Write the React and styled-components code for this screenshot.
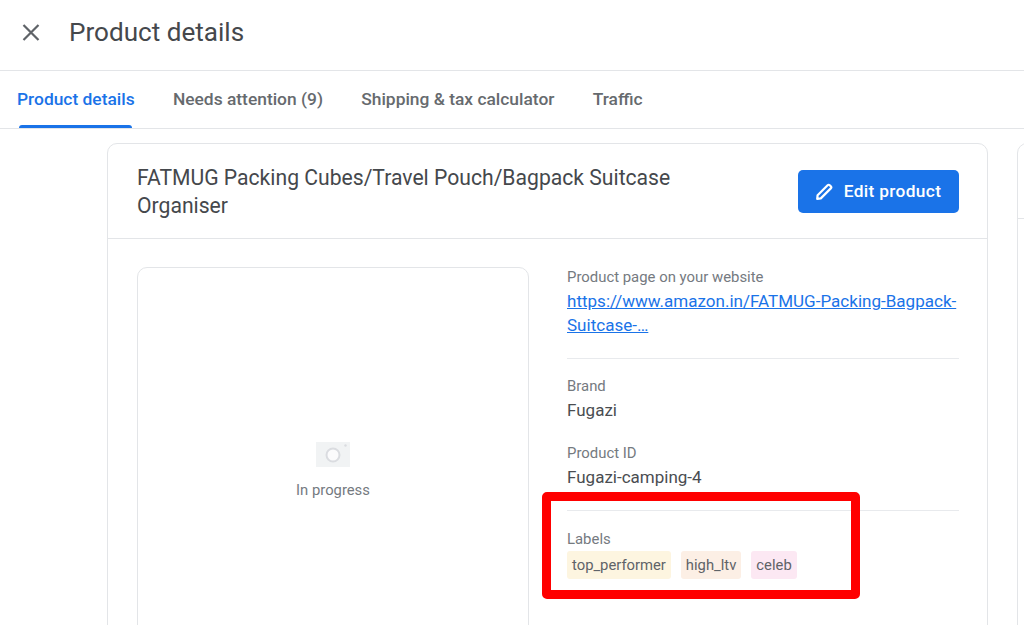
import React from 'react';
import styled, { createGlobalStyle } from 'styled-components';

const GlobalStyle = createGlobalStyle`
  html, body {
    margin: 0;
    padding: 0;
    height: 100%;
    overflow: hidden;
    background: #fff;
    font-family: Roboto, "Liberation Sans", sans-serif;
  }
`;

const Page = styled.div`
  position: relative;
  width: 1024px;
  height: 625px;
  overflow: hidden;
`;

const TopBar = styled.header`
  height: 70px;
  box-sizing: content-box;
  display: flex;
  align-items: center;
  border-bottom: 1px solid #e3e5e8;
`;

const CloseButton = styled.div`
  width: 69px;
  padding: 0 0 6px 21px;
  box-sizing: border-box;
  display: flex;
  align-items: center;
  color: #5f6368;
`;

const PageTitle = styled.h1`
  margin: 0 0 6px;
  font-size: 26.1px;
  font-weight: 400;
  color: #45484c;
`;

const Tabs = styled.nav`
  height: 57px;
  display: flex;
  padding-left: 17px;
  gap: 38.25px;
  border-bottom: 1px solid #e3e5e8;
`;

const Tab = styled.div`
  position: relative;
  display: flex;
  align-items: center;
  box-sizing: border-box;
  padding-bottom: 2px;
  font-size: 17.4px;
  font-weight: 470;
  color: ${(props) => (props.active ? '#1a73e8' : '#666a6e')};

  ${(props) => props.active && `
    &::after {
      content: '';
      position: absolute;
      left: 2px;
      right: 3px;
      bottom: 0;
      height: 3px;
      border-radius: 3px 3px 0 0;
      background: #1a73e8;
    }
  `}
`;

const Content = styled.main`
  display: flex;
  gap: 29px;
  padding: 14px 0 0 107px;
`;

const Card = styled.section`
  flex: none;
  width: 881px;
  height: 520px;
  box-sizing: border-box;
  border: 1px solid #e3e5e8;
  border-radius: 10px;
`;

const SideCard = styled.section`
  flex: none;
  width: 120px;
  height: 520px;
  box-sizing: border-box;
  border: 1px solid #e3e5e8;
  border-radius: 10px;
`;

const SideCardHeader = styled.div`
  height: 74px;
  border-bottom: 1px solid #e3e5e8;
`;

const CardHeader = styled.div`
  height: 95px;
  box-sizing: border-box;
  display: flex;
  align-items: center;
  justify-content: space-between;
  padding: 0 28px 0 29px;
  border-bottom: 1px solid #e3e5e8;
`;

const ProductName = styled.h2`
  margin: 1px 0 0;
  width: 560px;
  font-size: 21.15px;
  line-height: 28px;
  font-weight: 400;
  color: #45484c;
`;

const EditButton = styled.button`
  width: 161px;
  height: 43px;
  display: flex;
  align-items: center;
  justify-content: center;
  gap: 11px;
  padding: 0;
  border: 0;
  border-radius: 5px;
  background: #1a73e8;
  color: #fff;
  font-family: inherit;
  font-size: 17.3px;
  letter-spacing: 0.35px;
  font-weight: 500;
`;

const CardBody = styled.div`
  display: flex;
  gap: 38px;
  padding: 28px 28px 0 29px;
`;

const ImageBox = styled.div`
  flex: none;
  width: 392px;
  height: 400px;
  box-sizing: border-box;
  display: flex;
  flex-direction: column;
  align-items: center;
  padding-top: 174px;
  border: 1px solid #e3e5e8;
  border-radius: 10px;
`;

const ImageStatus = styled.div`
  margin-top: 14px;
  font-size: 14.8px;
  line-height: 18px;
  color: #757a7f;
`;

const Details = styled.div`
  flex: 1;
  min-width: 0;
`;

const Section = styled.div`
  padding: ${(props) => props.padding || '0'};
  border-bottom: ${(props) => (props.divided ? '1px solid #e8eaed' : '0')};
`;

const Field = styled.div`
  margin-bottom: ${(props) => props.spaced || '0'};
`;

const FieldLabel = styled.div`
  font-size: 14.9px;
  line-height: 20px;
  color: #757a7f;
`;

const FieldValue = styled.div`
  margin-top: 2px;
  font-size: 17px;
  line-height: 24px;
  color: #4a4d51;
`;

const ProductLink = styled.a`
  display: block;
  margin-top: 3px;
  font-size: 17.05px;
  line-height: 23.5px;
  color: #1a73e8;
  text-decoration: underline;
`;

const Chips = styled.div`
  display: flex;
  gap: 10px;
  margin-top: 2px;
`;

const Chip = styled.span`
  height: 28px;
  display: flex;
  align-items: center;
  padding: 0 5px;
  border-radius: 3px;
  font-size: 14.8px;
  color: #5f6368;
  background: ${(props) => props.color};
`;

const Highlight = styled.div`
  position: absolute;
  left: 542px;
  top: 492px;
  width: 318px;
  height: 107px;
  box-sizing: border-box;
  border: 9px solid #ff0000;
  border-radius: 5px;
`;

const CloseIcon = () => (
  <svg width="20" height="20" viewBox="0 0 20 20" fill="none" stroke="currentColor" strokeWidth="2.2">
    <path d="M2.5 3 L17.5 18 M17.5 3 L2.5 18" />
  </svg>
);

const PencilIcon = () => (
  <svg width="17" height="17" viewBox="0 0 17 17" fill="none" stroke="#fff" strokeWidth="2.2" strokeLinejoin="round">
    <path d="M1.2 15.8 L1.6 12.2 L11.6 2.2 C12.2 1.6 13.1 1.6 13.7 2.2 L14.8 3.3 C15.4 3.9 15.4 4.8 14.8 5.4 L4.8 15.4 Z" />
  </svg>
);

const PlaceholderIcon = () => (
  <svg width="34" height="25" viewBox="0 0 34 25">
    <rect width="34" height="25" fill="#f1f3f4" />
    <circle cx="17" cy="13" r="6.5" fill="#fbfbfc" stroke="#dadce0" strokeWidth="2" />
    <circle cx="29.5" cy="3.5" r="1.2" fill="#dadce0" />
  </svg>
);

const App = () => (
  <Page>
    <GlobalStyle />
    <TopBar>
      <CloseButton><CloseIcon /></CloseButton>
      <PageTitle>Product details</PageTitle>
    </TopBar>
    <Tabs>
      <Tab active>Product details</Tab>
      <Tab>Needs attention (9)</Tab>
      <Tab>Shipping &amp; tax calculator</Tab>
      <Tab>Traffic</Tab>
    </Tabs>
    <Content>
      <Card>
        <CardHeader>
          <ProductName>FATMUG Packing Cubes/Travel Pouch/Bagpack Suitcase Organiser</ProductName>
          <EditButton><PencilIcon />Edit product</EditButton>
        </CardHeader>
        <CardBody>
          <ImageBox>
            <PlaceholderIcon />
            <ImageStatus>In progress</ImageStatus>
          </ImageBox>
          <Details>
            <Section divided padding="0 0 21px">
              <FieldLabel>Product page on your website</FieldLabel>
              <ProductLink>https://www.amazon.in/FATMUG-Packing-Bagpack-Suitcase-…</ProductLink>
            </Section>
            <Section divided padding="17px 0 21px">
              <Field spaced="21px">
                <FieldLabel>Brand</FieldLabel>
                <FieldValue>Fugazi</FieldValue>
              </Field>
              <Field>
                <FieldLabel>Product ID</FieldLabel>
                <FieldValue>Fugazi-camping-4</FieldValue>
              </Field>
            </Section>
            <Section padding="18px 0 0">
              <FieldLabel>Labels</FieldLabel>
              <Chips>
                <Chip color="#fdf5e0">top_performer</Chip>
                <Chip color="#fcefe5">high_ltv</Chip>
                <Chip color="#fce8f3">celeb</Chip>
              </Chips>
            </Section>
          </Details>
        </CardBody>
      </Card>
      <SideCard>
        <SideCardHeader />
      </SideCard>
    </Content>
    <Highlight />
  </Page>
);

export default App;
